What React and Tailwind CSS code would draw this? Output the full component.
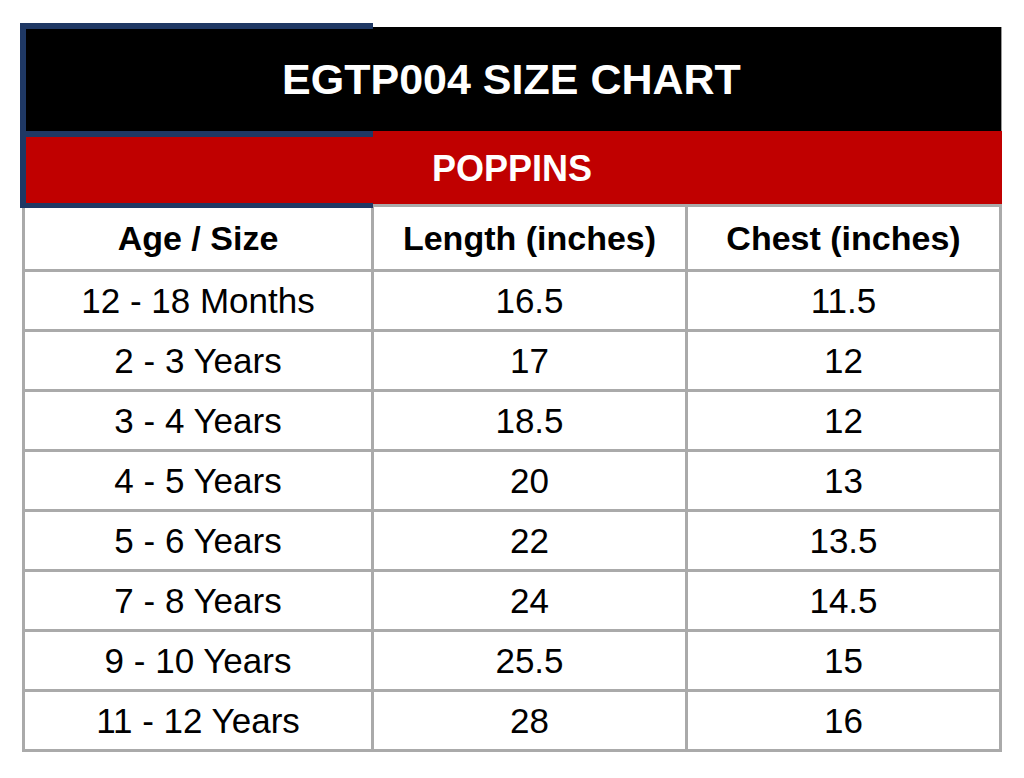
import React from "react";

const rows = [
  ["12 - 18 Months", "16.5", "11.5"],
  ["2 - 3 Years", "17", "12"],
  ["3 - 4 Years", "18.5", "12"],
  ["4 - 5 Years", "20", "13"],
  ["5 - 6 Years", "22", "13.5"],
  ["7 - 8 Years", "24", "14.5"],
  ["9 - 10 Years", "25.5", "15"],
  ["11 - 12 Years", "28", "16"],
];

const cell = "flex items-center justify-center border-[#aaaaaa]";

const SizeChart = () => {
  return (
    <div className="relative w-[980px] ml-[22px] mt-[27px]">
      {/* blue frame over the left part of the heading */}
      <div className="absolute left-[-2px] top-[-4px] w-[353px] h-[185px] border-t-[6px] border-l-[6px] border-b-[5px] border-[#1f3864] pointer-events-none">
        <div className="absolute left-0 right-0 top-[102px] h-[6px] bg-[#1f3864]" />
      </div>

      <div className="h-[104px] bg-black flex items-center justify-center border-r border-[#999999]">
        <h1 className="text-white font-bold text-[43px] leading-none">
          EGTP004 SIZE CHART
        </h1>
      </div>
      <div className="h-[73px] bg-[#c00000] flex items-center justify-center pt-[2px]">
        <h2 className="text-white font-bold text-[36px] leading-none">
          POPPINS
        </h2>
      </div>

      <div className="grid grid-cols-[349px_314px_311px] border-[3px] border-b-0 border-[#aaaaaa] text-black text-[35px] leading-none">
        <div className={`${cell} h-[65px] border-r-[3px] border-b-[3px] font-bold text-[34px]`}>
          Age / Size
        </div>
        <div className={`${cell} h-[65px] border-r-[3px] border-b-[3px] font-bold text-[34px]`}>
          Length (inches)
        </div>
        <div className={`${cell} h-[65px] border-b-[3px] font-bold text-[34px]`}>
          Chest (inches)
        </div>
        {rows.map((r, i) => (
          <React.Fragment key={i}>
            <div className={`${cell} h-[60px] border-r-[3px] border-b-[3px]`}>{r[0]}</div>
            <div className={`${cell} h-[60px] border-r-[3px] border-b-[3px]`}>{r[1]}</div>
            <div className={`${cell} h-[60px] border-b-[3px]`}>{r[2]}</div>
          </React.Fragment>
        ))}
      </div>
    </div>
  );
};

export default function App() {
  return (
    <div
      className="w-[1024px] h-[778px] bg-white overflow-hidden"
      style={{ fontFamily: '"Liberation Sans", Arial, sans-serif' }}
    >
      <SizeChart />
    </div>
  );
}
